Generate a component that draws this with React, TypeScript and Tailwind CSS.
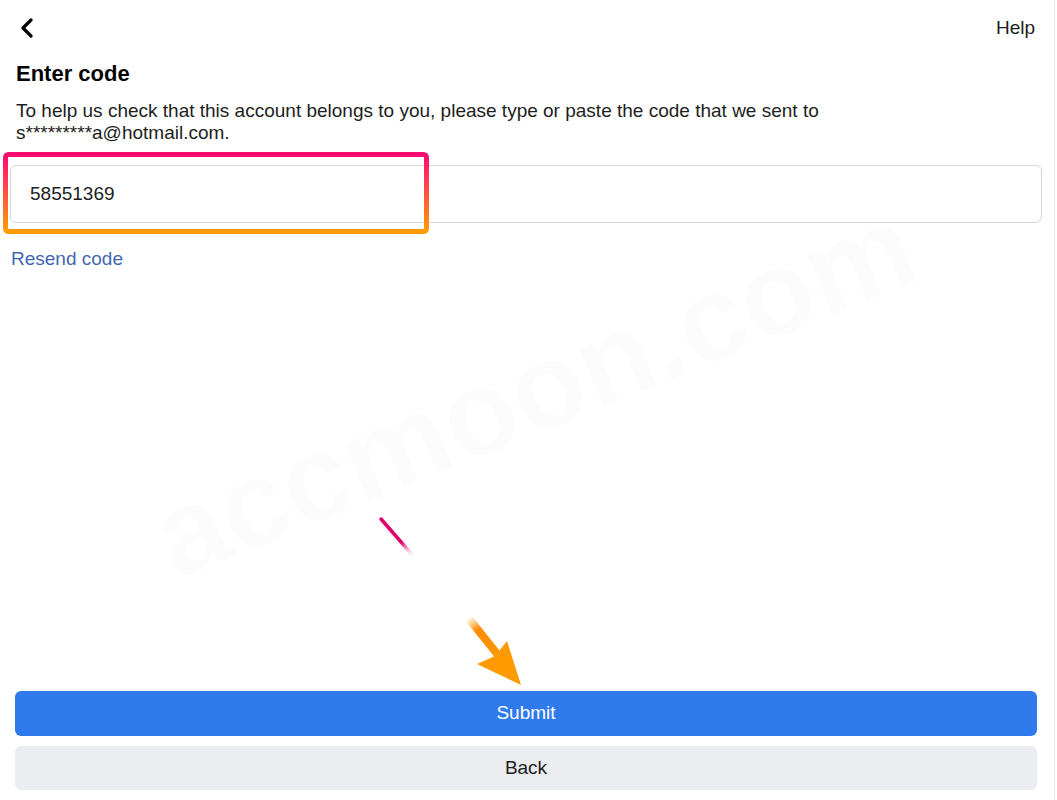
import React from "react";

export default function App() {
  return (
    <div
      className="relative w-[1057px] h-[800px] bg-white overflow-hidden text-[#1c1e21]"
      style={{ fontFamily: '"Liberation Sans", Arial, sans-serif' }}
    >
      {/* watermark */}
      <div className="pointer-events-none absolute left-[130px] top-[330px] rotate-[-22deg] text-[120px] font-bold text-[#fcfcfc] leading-none select-none whitespace-nowrap">
        accmoon.com
      </div>

      <div className="relative flex flex-col h-full pr-[3px]">
        <div className="flex items-center justify-between h-[56px] pl-[20px] pr-[19px]">
          <svg width="14" height="20" viewBox="0 0 14 20">
            <path d="M11 2 L3 10 L11 18" fill="none" stroke="#050505" strokeWidth="3.2" strokeLinecap="round" strokeLinejoin="round" />
          </svg>
          <span className="text-[19px] text-[#1c1e21]">Help</span>
        </div>

        <div className="px-[16px]">
          <h1 className="mt-[5px] text-[22px] font-bold leading-[26px] text-[#050505]">Enter code</h1>
          <p className="mt-[13px] text-[19px] leading-[22px] text-[#1c1e21] max-w-[840px]">
            To help us check that this account belongs to you, please type or paste the code that we sent to s*********a@hotmail.com.
          </p>
        </div>

        <div className="relative mt-[21px] ml-[10px] mr-[12px]">
          <div className="h-[58px] rounded-[6px] border border-[#d3d6db] flex items-center pl-[19px] text-[19px] text-[#1c1e21]">
            58551369
          </div>
          {/* highlight annotation */}
          <svg className="absolute left-[-7px] top-[-13px]" width="426" height="82" viewBox="0 0 426 82">
            <defs>
              <linearGradient id="hl" x1="0" y1="0" x2="0" y2="1">
                <stop offset="0" stopColor="#ff0a6e" />
                <stop offset="0.45" stopColor="#ff4a4a" />
                <stop offset="1" stopColor="#ff9c00" />
              </linearGradient>
            </defs>
            <rect x="2.5" y="2.5" width="421" height="77" rx="3" fill="none" stroke="url(#hl)" strokeWidth="5" />
          </svg>
        </div>

        <div className="mt-[25px] pl-[11px] text-[19px] text-[#4267b2] leading-[22px]">Resend code</div>

        <div className="flex-1" />

        <div className="flex flex-col gap-[10px] px-[15px] pb-[10px] pr-[17px]">
          <div className="h-[45px] rounded-[6px] bg-[#2f7bee] text-white text-[19px] flex items-center justify-center">
            Submit
          </div>
          <div className="h-[44px] rounded-[6px] bg-[#ebedf1] text-[#1c1e21] text-[19px] flex items-center justify-center">
            Back
          </div>
        </div>
      </div>

      {/* right edge line */}
      <div className="absolute right-[2px] top-0 h-full w-px bg-[#e6e6e6]" />

      {/* arrow annotation */}
      <svg className="absolute left-[370px] top-[510px] pointer-events-none" width="170" height="180" viewBox="0 0 170 180">
        <defs>
          <linearGradient id="pk" gradientUnits="userSpaceOnUse" x1="11" y1="9" x2="45" y2="48">
            <stop offset="0" stopColor="#e0006a" />
            <stop offset="0.6" stopColor="#e0006a" />
            <stop offset="1" stopColor="#ffffff" stopOpacity="0" />
          </linearGradient>
          <linearGradient id="or" gradientUnits="userSpaceOnUse" x1="98" y1="108" x2="130" y2="148">
            <stop offset="0" stopColor="#ff9a00" stopOpacity="0" />
            <stop offset="0.3" stopColor="#ff8a00" />
            <stop offset="1" stopColor="#ff9a00" />
          </linearGradient>
        </defs>
        <line x1="11" y1="9" x2="45" y2="48" stroke="url(#pk)" strokeWidth="3.5" strokeLinecap="round" />
        <line x1="100" y1="110" x2="132" y2="150" stroke="url(#or)" strokeWidth="8" strokeLinecap="round" />
        <polygon points="151,175 107,154 125,146 137,131" fill="#ff9a00" />
      </svg>
    </div>
  );
}
